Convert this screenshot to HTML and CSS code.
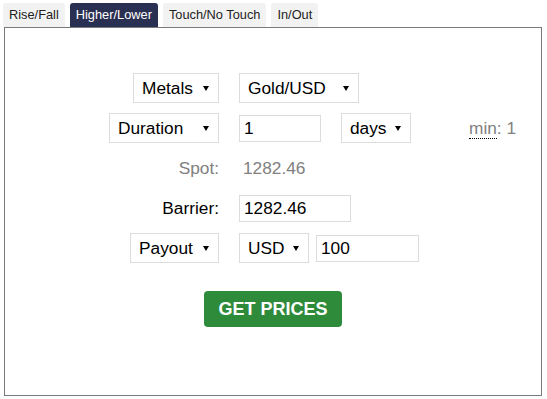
FILE: index.html
```html
<!DOCTYPE html>
<html lang="en">
<head>
    <meta charset="UTF-8">
    <meta name="viewport" content="width=device-width, initial-scale=1.0">
    <title>Trade</title>
    <link rel="stylesheet" href="styles.css">
</head>
<body>
    <div class="trade">
        <div class="tabs">
            <div class="tab">Rise/Fall</div>
            <div class="tab active">Higher/Lower</div>
            <div class="tab">Touch/No Touch</div>
            <div class="tab">In/Out</div>
        </div>
        <div class="panel">
            <div class="form">
                <div class="cell left">
                    <div class="select w-metals"><span>Metals</span><i class="arrow"></i></div>
                </div>
                <div class="cell">
                    <div class="select w-asset"><span>Gold/USD</span><i class="arrow"></i></div>
                </div>

                <div class="cell left">
                    <div class="select w-duration"><span>Duration</span><i class="arrow"></i></div>
                </div>
                <div class="cell">
                    <div class="input w-amount">1</div>
                    <div class="select w-unit"><span>days</span><i class="arrow"></i></div>
                    <div class="min"><abbr>min</abbr>: 1</div>
                </div>

                <div class="cell left label muted">Spot:</div>
                <div class="cell muted spot">1282.46</div>

                <div class="cell left label">Barrier:</div>
                <div class="cell">
                    <div class="input w-barrier">1282.46</div>
                </div>

                <div class="cell left">
                    <div class="select w-payout"><span>Payout</span><i class="arrow"></i></div>
                </div>
                <div class="cell tight">
                    <div class="select w-unit"><span>USD</span><i class="arrow"></i></div>
                    <div class="input w-stake">100</div>
                </div>
            </div>
            <div class="actions">
                <button class="btn">GET PRICES</button>
            </div>
        </div>
    </div>
</body>
</html>
```

FILE: styles.css
```css
body {
    margin: 0;
    font-family: "Liberation Sans", Arial, sans-serif;
    color: #000;
    background: #fff;
}
.trade {
    margin: 3px 5px 0 4px;
}
.tabs {
    display: flex;
    gap: 5px;
    margin-left: -1px;
}
.tab {
    height: 24px;
    line-height: 24px;
    padding: 0 6px;
    font-size: 12.8px;
    color: #222;
    background: #f2f2f2;
    border-radius: 3px 3px 0 0;
}
.tab.active {
    background: #2a3052;
    color: #fff;
}
.panel {
    box-sizing: border-box;
    height: 369px;
    border: 1px solid #7a7a7a;
    padding-top: 45px;
}
.form {
    display: grid;
    grid-template-columns: 214px auto;
    grid-auto-rows: 30px;
    column-gap: 20px;
    row-gap: 10px;
    font-size: 17.3px;
}
.cell {
    display: flex;
    align-items: center;
    gap: 20px;
}
.cell.left {
    justify-content: flex-end;
}
.cell.tight {
    gap: 7px;
}
.muted {
    color: #808080;
}
.spot {
    padding-left: 4px;
}
.select {
    box-sizing: border-box;
    height: 30px;
    display: flex;
    align-items: center;
    justify-content: space-between;
    padding: 0 9px 0 8px;
    border: 1px solid #dcdcdc;
    background: #fff;
}
.arrow {
    width: 0;
    height: 0;
    border-left: 3px solid transparent;
    border-right: 3px solid transparent;
    border-top: 5px solid #000;
}
.input {
    box-sizing: border-box;
    height: 27px;
    line-height: 25px;
    padding: 0 4px;
    border: 1px solid #dcdcdc;
}
.w-metals { width: 86px; }
.w-asset { width: 120px; }
.w-duration { width: 110px; }
.w-unit { width: 70px; }
.w-payout { width: 89px; }
.w-amount { width: 82px; }
.w-barrier { width: 112px; }
.w-stake { width: 103px; }
.min {
    margin-left: 38px;
    color: #808080;
}
.min abbr {
    text-decoration: none;
    border-bottom: 1px dotted #000;
}
.actions {
    display: flex;
    justify-content: center;
    margin-top: 28px;
}
.btn {
    width: 138px;
    height: 36px;
    border: none;
    border-radius: 4px;
    background: #2e8b3a;
    color: #fff;
    font-family: "Liberation Sans", Arial, sans-serif;
    font-size: 18px;
    font-weight: bold;
    cursor: pointer;
}
```
